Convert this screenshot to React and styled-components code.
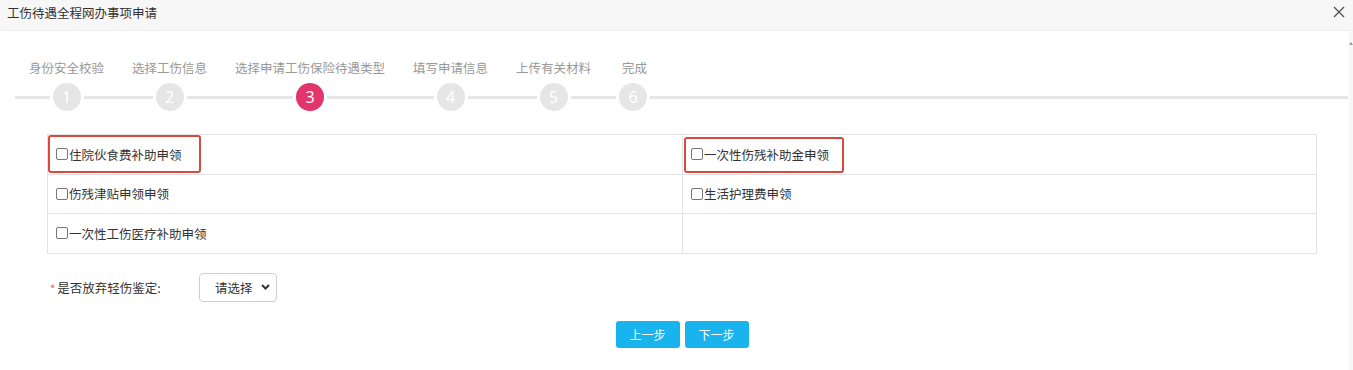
import styled, { createGlobalStyle } from "styled-components";

const GlobalStyle = createGlobalStyle`
  html, body {
    margin: 0;
    padding: 0;
    background: #ffffff;
  }
  body {
    font-family: "Noto Sans CJK SC", "Noto Sans", sans-serif;
    color: #333333;
  }
`;

const steps = [
  "身份安全校验",
  "选择工伤信息",
  "选择申请工伤保险待遇类型",
  "填写申请信息",
  "上传有关材料",
  "完成",
];

const options = [
  { label: "住院伙食费补助申领", mark: { left: 0, top: 0, width: 153, height: 38 } },
  { label: "一次性伤残补助金申领", mark: { left: 1, top: 2, width: 160, height: 36 } },
  { label: "伤残津贴申领申领" },
  { label: "生活护理费申领" },
  { label: "一次性工伤医疗补助申领" },
  { label: "" },
];

export default function App() {
  return (
    <Page>
      <GlobalStyle />
      <Header>
        <Title>工伤待遇全程网办事项申请</Title>
        <Close aria-label="关闭">
          <svg width="12" height="12" viewBox="0 0 12 12">
            <path d="M1 1L11 11M11 1L1 11" stroke="#555" strokeWidth="1.4" />
          </svg>
        </Close>
      </Header>
      <Body>
        <Content>
          <Steps>
            {steps.map((s, i) => (
              <Step key={s}>
                <StepLabel $last={i === steps.length - 1}>{s}</StepLabel>
                <Node>
                  <Line />
                  <Circle $active={i === 2}>{i + 1}</Circle>
                  <Line />
                </Node>
              </Step>
            ))}
            <Tail>
              <Line />
            </Tail>
          </Steps>

          <Table>
            {options.map((o, i) => (
              <Cell key={i} $right={i % 2 === 1}>
                {o.label && (
                  <>
                    <Box />
                    <CellText>{o.label}</CellText>
                  </>
                )}
                {o.mark && (
                  <Mark
                    style={{
                      left: o.mark.left,
                      top: o.mark.top,
                      width: o.mark.width,
                      height: o.mark.height,
                    }}
                  />
                )}
              </Cell>
            ))}
          </Table>

          <FormRow>
            <FormLabel>
              <Star>*</Star>是否放弃轻伤鉴定:
            </FormLabel>
            <Select>
              <span>请选择</span>
              <svg width="9" height="6" viewBox="0 0 9 6">
                <path d="M1 1L4.5 4.5L8 1" stroke="#333" strokeWidth="2" fill="none" />
              </svg>
            </Select>
          </FormRow>

          <Actions>
            <Button>上一步</Button>
            <Button>下一步</Button>
          </Actions>
        </Content>
        <Scrollbar>
          <Arrow />
        </Scrollbar>
      </Body>
    </Page>
  );
}

const Page = styled.div`
  width: 1353px;
  height: 370px;
  display: flex;
  flex-direction: column;
  overflow: hidden;
`;

const Header = styled.div`
  height: 31px;
  background: #f7f7f7;
  border-bottom: 1px solid #f0f0f0;
  box-sizing: border-box;
  padding: 0 8px 0 7px;
  display: flex;
  align-items: center;
  justify-content: space-between;
`;

const Title = styled.div`
  font-size: 12.5px;
  color: #333;
  margin-top: -6px;
`;

const Close = styled.div`
  width: 12px;
  height: 12px;
  display: flex;
  margin-top: -6px;
`;

const Body = styled.div`
  flex: 1;
  display: flex;
`;

const Content = styled.div`
  flex: 1;
  display: flex;
  flex-direction: column;
`;

const Scrollbar = styled.div`
  width: 4px;
  background: #f8f8f8;
  display: flex;
  justify-content: center;
  padding-top: 11px;
`;

const Arrow = styled.div`
  width: 0;
  height: 0;
  border-left: 2px solid transparent;
  border-right: 2px solid transparent;
  border-bottom: 3px solid #999;
`;

const Steps = styled.div`
  display: flex;
  margin: 29px 1px 0 15px;
`;

const Step = styled.div`
  display: flex;
  flex-direction: column;
  align-items: stretch;
`;

const StepLabel = styled.div`
  font-size: 12.5px;
  line-height: 15px;
  color: #999;
  padding: ${(p) => (p.$last ? "0 14px 0 17px" : "0 14px")};
  margin-bottom: 8px;
  white-space: nowrap;
`;

const Node = styled.div`
  display: flex;
  align-items: center;
  height: 28px;
`;

const Line = styled.div`
  flex: 1;
  height: 3px;
  background: #e6e6e6;
`;

const Tail = styled.div`
  flex: 1;
  display: flex;
  align-items: flex-end;
  padding-bottom: 12px;
`;

const Circle = styled.div`
  width: 28px;
  height: 28px;
  margin: 0 3px;
  border-radius: 50%;
  background: ${(p) => (p.$active ? "#e2356c" : "#e6e6e6")};
  color: #ffffff;
  font-family: "Noto Sans", sans-serif;
  font-size: 16px;
  display: flex;
  align-items: center;
  justify-content: center;
`;

const Table = styled.div`
  display: grid;
  grid-template-columns: 1fr 1fr;
  margin: 23px 32px 0 47px;
  border: 1px solid #e3e3e3;
  border-bottom: none;
`;

const Cell = styled.div`
  position: relative;
  height: 39.5px;
  box-sizing: border-box;
  border-bottom: 1px solid #e3e3e3;
  border-left: ${(p) => (p.$right ? "1px solid #e3e3e3" : "none")};
  display: flex;
  align-items: center;
  padding-left: 8px;
`;

const Box = styled.span`
  width: 10px;
  height: 10px;
  border: 1px solid #777;
  border-radius: 2px;
  background: #fff;
  margin-right: 1px;
`;

const CellText = styled.span`
  font-size: 12.5px;
  color: #333;
`;

const Mark = styled.div`
  position: absolute;
  box-sizing: border-box;
  border: 2px solid #d84a3f;
  border-radius: 3px;
  pointer-events: none;
`;

const FormRow = styled.div`
  display: flex;
  align-items: center;
  margin: 19px 0 0 50px;
`;

const FormLabel = styled.div`
  width: 149px;
  font-size: 12.5px;
  color: #333;
`;

const Star = styled.span`
  color: #e05a4f;
  font-size: 11px;
  margin-right: 2px;
`;

const Select = styled.div`
  width: 78px;
  height: 29px;
  box-sizing: border-box;
  border: 1px solid #cfcfcf;
  border-radius: 4px;
  display: flex;
  align-items: center;
  justify-content: space-between;
  padding: 0 6px 0 15px;
  font-size: 12.5px;
  color: #333;
`;

const Actions = styled.div`
  display: flex;
  justify-content: center;
  gap: 5px;
  margin: 19px 32px 0 47px;
`;

const Button = styled.button`
  width: 64px;
  height: 27px;
  border: none;
  border-radius: 3px;
  background: #19b3ee;
  color: #ffffff;
  font-family: "Noto Sans CJK SC", sans-serif;
  font-size: 12px;
  padding: 0;
`;
